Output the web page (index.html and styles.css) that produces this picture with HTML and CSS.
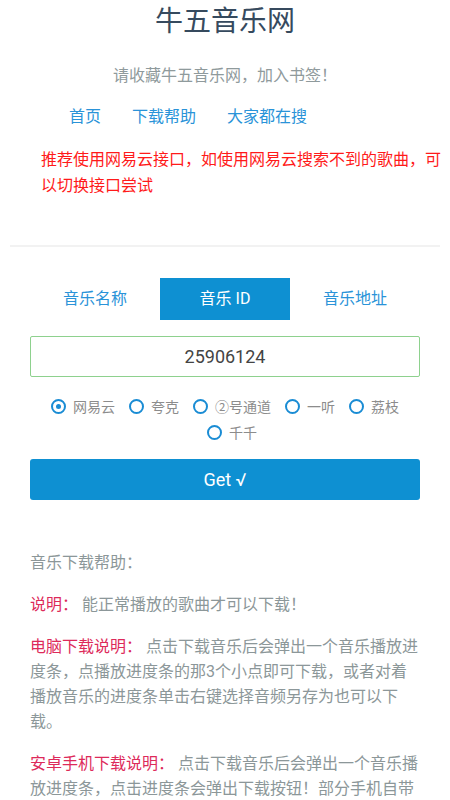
FILE: index.html
```html
<!DOCTYPE html>
<html lang="zh-CN">
<head>
<meta charset="utf-8">
<title>牛五音乐网</title>
<link rel="stylesheet" href="styles.css">
</head>
<body>
<div class="page">
  <header class="head">
    <h1 class="title">牛五音乐网</h1>
    <p class="subtitle">请收藏牛五音乐网，加入书签！</p>
    <nav class="nav">
      <a class="nav-link" href="#">首页</a>
      <a class="nav-link" href="#">下载帮助</a>
      <a class="nav-link" href="#">大家都在搜</a>
    </nav>
    <p class="notice">推荐使用网易云接口，如使用网易云搜索不到的歌曲，可以切换接口尝试</p>
  </header>
  <div class="divider"></div>
  <main class="main">
    <div class="tabs">
      <div class="tab">音乐名称</div>
      <div class="tab active">音乐 ID</div>
      <div class="tab">音乐地址</div>
    </div>
    <input class="input" type="text" value="25906124">
    <div class="radios">
      <label class="radio"><span class="dot checked"></span><span class="rlabel">网易云</span></label>
      <label class="radio"><span class="dot"></span><span class="rlabel">夸克</span></label>
      <label class="radio"><span class="dot"></span><span class="rlabel">②号通道</span></label>
      <label class="radio"><span class="dot"></span><span class="rlabel">一听</span></label>
      <label class="radio"><span class="dot"></span><span class="rlabel">荔枝</span></label>
      <label class="radio"><span class="dot"></span><span class="rlabel">千千</span></label>
    </div>
    <button class="btn" type="button">Get √</button>
    <section class="help">
      <p class="help-p">音乐下载帮助：</p>
      <p class="help-p"><span class="lbl">说明：</span> 能正常播放的歌曲才可以下载！</p>
      <p class="help-p"><span class="lbl">电脑下载说明：</span> 点击下载音乐后会弹出一个音乐播放进度条，点播放进度条的那3个小点即可下载，或者对着播放音乐的进度条单击右键选择音频另存为也可以下载。</p>
      <p class="help-p"><span class="lbl">安卓手机下载说明：</span> 点击下载音乐后会弹出一个音乐播放进度条，点击进度条会弹出下载按钮！部分手机自带浏览器可能无法下载，建议使用其他浏览器。</p>
    </section>
  </main>
</div>
</body>
</html>
```
FILE: styles.css
```css
html, body {
  margin: 0;
  padding: 0;
  background: #ffffff;
}
body {
  font-family: Roboto, "Noto Sans CJK SC", sans-serif;
  color: #333;
}
.page {
  padding: 0 10px;
}
.title {
  margin: 0;
  font-size: 28px;
  font-weight: normal;
  line-height: 44px;
  text-align: center;
  color: #364a5e;
}
.subtitle {
  margin: 20px 0 0;
  font-size: 16px;
  line-height: 24px;
  text-align: center;
  color: #8f9a9c;
}
.nav {
  display: flex;
  gap: 31px;
  margin-top: 17px;
  padding-left: 59px;
  line-height: 24px;
}
.nav-link {
  font-size: 16px;
  color: #2a93d8;
  text-decoration: none;
}
.notice {
  margin: 18px -10px 0 0;
  padding-left: 31px;
  font-size: 16px;
  line-height: 26px;
  color: #ff1a1a;
}
.divider {
  margin-top: 46px;
  height: 2px;
  background: #f2f2f2;
}
.main {
  padding: 0 20px;
}
.tabs {
  display: flex;
  margin-top: 31px;
}
.tab {
  flex: 1;
  height: 42px;
  line-height: 42px;
  text-align: center;
  font-size: 16px;
  color: #2a93d8;
}
.tab.active {
  background: #0e90d2;
  color: #ffffff;
}
.input {
  display: block;
  box-sizing: border-box;
  width: 100%;
  height: 41px;
  margin-top: 16px;
  border: 1px solid #8ed18e;
  border-radius: 2px;
  text-align: center;
  font-family: Roboto, "Noto Sans CJK SC", sans-serif;
  font-size: 18px;
  color: #444;
  outline: none;
}
.radios {
  display: flex;
  flex-wrap: wrap;
  justify-content: center;
  margin-top: 16px;
}
.radio {
  display: flex;
  align-items: center;
  height: 26px;
}
.radio + .radio {
  margin-left: 14px;
}
.dot {
  box-sizing: border-box;
  width: 15px;
  height: 15px;
  border: 2.5px solid #1a8cd4;
  border-radius: 50%;
  display: flex;
  align-items: center;
  justify-content: center;
}
.dot.checked::after {
  content: "";
  width: 5px;
  height: 5px;
  border-radius: 50%;
  background: #1a8cd4;
}
.rlabel {
  margin-left: 7px;
  font-size: 14px;
  color: #8c8c8c;
}
.btn {
  display: block;
  width: 100%;
  height: 41px;
  margin-top: 14px;
  border: none;
  border-radius: 3px;
  background: #0e90d2;
  color: #ffffff;
  font-family: Roboto, "Noto Sans CJK SC", sans-serif;
  font-size: 18px;
}
.help {
  margin-top: 50px;
}
.help-p {
  margin: 0 0 17px;
  font-size: 16px;
  line-height: 25px;
  color: #8c9799;
}
.lbl {
  color: #dd2a5a;
}
```
